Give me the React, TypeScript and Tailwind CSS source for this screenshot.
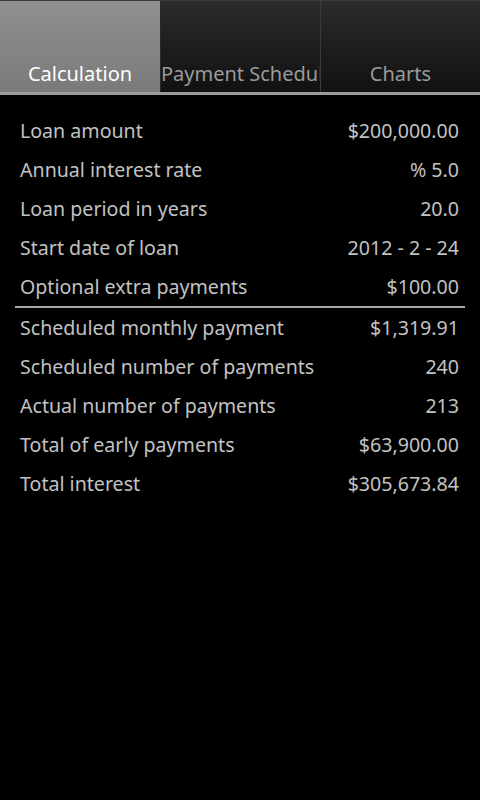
const inputs = [
  ['Loan amount', '$200,000.00'],
  ['Annual interest rate', '% 5.0'],
  ['Loan period in years', '20.0'],
  ['Start date of loan', '2012 - 2 - 24'],
  ['Optional extra payments', '$100.00'],
];

const results = [
  ['Scheduled monthly payment', '$1,319.91'],
  ['Scheduled number of payments', '240'],
  ['Actual number of payments', '213'],
  ['Total of early payments', '$63,900.00'],
  ['Total interest', '$305,673.84'],
];

function Row({ label, value }: { label: string; value: string }) {
  return (
    <div className="flex h-[39px] items-center justify-between px-5 text-[19.6px] text-[#c2c2c2]">
      <span>{label}</span>
      <span className="pr-px">{value}</span>
    </div>
  );
}

export default function App() {
  return (
    <div
      className="min-h-[800px] w-[480px] bg-black"
      style={{ fontFamily: '"Noto Sans", "Open Sans", sans-serif' }}
    >
      {/* Tabs */}
      <div className="flex h-[92px] border-t border-[#3a3a3a]">
        <div className="flex w-[160px] items-end justify-center bg-gradient-to-b from-[#8f918e] to-[#7a7a7a] pb-[3px] text-[20px] text-white">
          Calculation
        </div>
        <div className="w-[160px] overflow-hidden whitespace-nowrap border-l border-[#2a2a2a] bg-gradient-to-b from-[#2c2c2c] to-[#111111] pt-[58px] text-[20px] text-[#9a9a9a]">
          Payment Schedule
        </div>
        <div className="flex w-[160px] items-end justify-center border-l border-[#3a3a3a] bg-gradient-to-b from-[#2c2c2c] to-[#111111] pb-[3px] text-[20px] text-[#9a9a9a]">
          Charts
        </div>
      </div>
      <div className="h-[3px] bg-[#9a9a9a]" />

      {/* Calculation */}
      <div className="pt-[16px]">
        {inputs.map(([l, v]) => (
          <Row key={l} label={l} value={v} />
        ))}
        <div className="mx-[15px] h-[2px] bg-[#a8a8a8]" />
        {results.map(([l, v]) => (
          <Row key={l} label={l} value={v} />
        ))}
      </div>
    </div>
  );
}
